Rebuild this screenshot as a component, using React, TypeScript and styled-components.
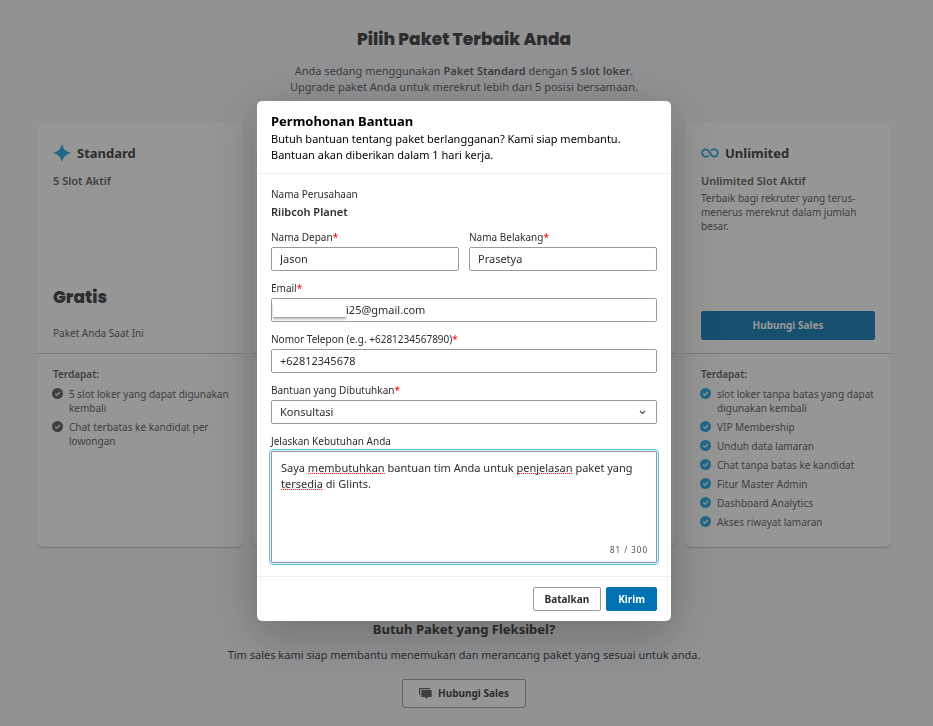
import React, { useState } from "react";
import styled, { createGlobalStyle } from "styled-components";

const GlobalStyle = createGlobalStyle`
  *, *::before, *::after { box-sizing: border-box; }
  body {
    margin: 0;
    background: #f5f7fa;
    color: #2d2d2d;
    font-family: "Noto Sans", "Open Sans", sans-serif;
    font-size: 11px;
    line-height: 16px;
  }
  h1, h2, h3, p, ul { margin: 0; padding: 0; }
  button, input, select, textarea { font: inherit; color: inherit; }
`;

const Page = styled.main`
  min-height: 100vh;
  padding: 26px 42px 18px 37px;
`;

const PageHeader = styled.header`
  display: flex;
  flex-direction: column;
  align-items: center;
  gap: 11px;
  text-align: center;
  color: #505050;
`;

const PageTitle = styled.h1`
  font-family: Poppins, Inter, sans-serif;
  font-size: 17px;
  line-height: 26px;
  font-weight: 800;
  color: #2d2d2d;
`;

const Strong = styled.strong`
  font-weight: 600;
`;

const Plans = styled.section`
  display: grid;
  grid-template-columns: repeat(4, 1fr);
  gap: 10px;
  margin-top: 27px;
`;

const PlanCard = styled.article`
  display: flex;
  flex-direction: column;
  min-height: 425px;
  background: #fff;
  border-radius: 6px;
  box-shadow: 0 1px 1px rgba(45, 45, 45, 0.3);
`;

const PlanSummary = styled.div`
  display: flex;
  flex-direction: column;
  height: 232px;
  padding: 21px 16px 13px;
  border-bottom: 1px solid #c6c6c6;
`;

const PlanName = styled.h2`
  display: flex;
  align-items: center;
  gap: 6px;
  font-size: 13px;
  line-height: 20px;
  font-weight: 700;
`;

const PlanSlots = styled.h3`
  margin-top: 10px;
  font-size: 11px;
  line-height: 16px;
  font-weight: 600;
  color: #505050;
`;

const PlanText = styled.p`
  margin-top: 2px;
  font-size: 10px;
  line-height: 14px;
  color: #505050;
`;

const PlanPrice = styled.p`
  margin-top: auto;
  font-family: Poppins, Inter, sans-serif;
  font-size: 17px;
  line-height: 26px;
  font-weight: 800;
`;

const PlanStatus = styled.p`
  margin-top: 16px;
  font-size: 10px;
  line-height: 14px;
  color: #505050;
`;

const PlanFeatures = styled.div`
  padding: 13px 12px 16px 16px;
  font-size: 10px;
  line-height: 14px;
  color: #505050;
`;

const FeatureTitle = styled.p`
  font-weight: 600;
`;

const FeatureList = styled.ul`
  display: flex;
  flex-direction: column;
  gap: 5px;
  margin-top: 6px;
  list-style: none;
`;

const Feature = styled.li`
  display: flex;
  gap: 6px;
  margin-left: -1px;

  svg { flex: none; margin-top: 1px; }
`;

const Button = styled.button<{ $primary?: boolean; $tall?: boolean }>`
  display: inline-flex;
  align-items: center;
  justify-content: center;
  gap: 6px;
  height: ${(p) => (p.$tall ? 29 : 24)}px;
  padding: 0 ${(p) => (p.$tall ? 16 : 11)}px 1px;
  border: 1px solid ${(p) => (p.$primary ? "#0072b1" : "#999")};
  border-radius: 2px;
  background: ${(p) => (p.$primary ? "#0072b1" : "#fff")};
  color: ${(p) => (p.$primary ? "#fff" : "#2d2d2d")};
  font-size: 10px;
  line-height: 14px;
  font-weight: 700;
  cursor: pointer;
`;

const CardAction = styled(Button)`
  width: 100%;
  margin-top: auto;
`;

const Flexible = styled.section`
  display: flex;
  flex-direction: column;
  align-items: center;
  margin-top: 72px;
  text-align: center;
`;

const FlexibleTitle = styled.h2`
  font-size: 13px;
  line-height: 20px;
  font-weight: 700;
`;

const FlexibleText = styled.p`
  margin: 8px 0 16px;
`;

const Overlay = styled.div`
  position: fixed;
  inset: 0;
  display: flex;
  align-items: flex-start;
  justify-content: center;
  padding: 101px 5px 0 0;
  background: rgba(45, 45, 45, 0.5);
`;

const Dialog = styled.form`
  width: 414px;
  max-width: 100%;
  background: #fff;
  border-radius: 5px;
  box-shadow: 0 12px 50px rgba(0, 0, 0, 0.25);
`;

const DialogHeader = styled.header`
  padding: 10px 14px;
  border-bottom: 1px solid #eee;
  color: #000;
`;

const DialogTitle = styled.h2`
  font-size: 13px;
  line-height: 20px;
  font-weight: 700;
`;

const DialogBody = styled.div`
  display: flex;
  flex-direction: column;
  gap: 10px;
  padding: 13px 14px;
`;

const Company = styled.div`
  display: flex;
  flex-direction: column;
  gap: 3px;
`;

const Caption = styled.span`
  font-size: 10px;
  line-height: 14px;
`;

const Field = styled.div`
  display: flex;
  flex: 1;
  flex-direction: column;
  gap: 3px;
  min-width: 0;
`;

const FieldRow = styled.div`
  display: flex;
  gap: 10px;
`;

const Label = styled.label`
  font-size: 10px;
  line-height: 14px;
`;

const Required = styled.span`
  color: #f00;
`;

const Control = styled.div`
  display: flex;
  align-items: center;
  height: 24px;
  border: 1px solid #999;
  border-radius: 2px;
  background: #fff;
`;

const TextInput = styled.input<{ $flush?: boolean }>`
  flex: 1;
  min-width: 0;
  height: 100%;
  padding: 0 8px 2px ${(p) => (p.$flush ? 0 : 8)}px;
  border: 0;
  outline: 0;
  background: none;
`;

const Redaction = styled.span`
  width: 73px;
  height: 14px;
  margin-left: 1px;
  background: #fff;
  box-shadow: 0 2px 2px rgba(0, 0, 0, 0.35);
`;

const Select = styled.select`
  flex: 1;
  height: 100%;
  padding: 0 8px;
  border: 0;
  outline: 0;
  appearance: none;
  background: none;
`;

const SelectControl = styled(Control)`
  display: grid;
  grid-template-columns: 1fr 28px;

  & > * { grid-row: 1; }
  & > select { grid-column: 1 / -1; }
  & > svg { grid-column: 2; justify-self: center; pointer-events: none; }
`;

const Note = styled.div`
  display: grid;
  height: 112px;
  border: 1px solid #999;
  border-radius: 2px;
  outline: 1px solid #5cc3ed;
  outline-offset: 1px;
  box-shadow: 0 0 0 1px #d8f0fa;
  background: #fff;

  & > * { grid-area: 1 / 1; }
`;

const NoteMarks = styled.div`
  padding: 8px 9px;
  color: transparent;
  white-space: pre-wrap;
  pointer-events: none;
  user-select: none;
`;

const Misspelt = styled.span`
  background: repeating-linear-gradient(90deg, #ff2020 0 1px, #ffc8c8 1px 2px) 0 13px / 100% 1px no-repeat;
`;

const NoteInput = styled.textarea`
  width: 100%;
  height: 100%;
  padding: 8px 9px;
  border: 0;
  outline: 0;
  resize: none;
  background: none;
`;

const Counter = styled.span`
  align-self: end;
  justify-self: end;
  padding: 0 8px 6px 0;
  font-size: 8px;
  line-height: 12px;
  letter-spacing: 1px;
  color: #505050;
  pointer-events: none;
`;

const DialogFooter = styled.footer`
  display: flex;
  justify-content: flex-end;
  gap: 5px;
  padding: 10px 14px;
  border-top: 1px solid #eee;
`;

const StarIcon = () => (
  <svg width="18" height="18" viewBox="0 0 18 18" aria-hidden="true">
    <path d="M9 0C10.200 3.600 11.200 5.200 12.200 5.900C13.200 6.900 14.800 7.800 18 9C14.800 10.200 13.200 11.100 12.200 12.100C11.200 12.900 10.200 14.400 9 18C7.800 14.400 6.800 12.900 5.800 12.100C4.800 11.100 3.200 10.200 0 9C3.200 7.800 4.800 6.900 5.800 5.900C6.800 5.200 7.800 3.600 9 0Z" fill="#17a2e0" />
  </svg>
);

const InfinityIcon = () => (
  <svg width="18" height="18" viewBox="0 0 18 18" fill="none" stroke="#17a2e0" strokeWidth="1.800" aria-hidden="true">
    <path d="M8 11.400C7.200 12.200 6.200 12.600 5 12.600C2.700 12.600 1.200 11 1.200 9C1.200 7 2.700 5.400 5 5.400C9 5.400 9 12.600 13 12.600C15.300 12.600 16.800 11 16.800 9C16.800 7 15.300 5.400 13 5.400C11.800 5.400 10.800 5.800 10 6.600" />
  </svg>
);

const CheckIcon = ({ color }: { color: string }) => (
  <svg width="11" height="11" viewBox="0 0 11 11" aria-hidden="true">
    <circle cx="5.500" cy="5.500" r="5.500" fill={color} />
    <path d="M3.100 5.600L4.800 7.200L8 4" fill="none" stroke="#fff" strokeWidth="1.200" />
  </svg>
);

const ChatIcon = () => (
  <svg width="13" height="11" viewBox="0 0 13 11" fill="#505050" aria-hidden="true">
    <path d="M0 0H11V1.200H1.200V7H0Z" />
    <path d="M2.300 2H12.700V9H9L7.500 11L6 9H2.300Z" />
  </svg>
);

const ChevronIcon = () => (
  <svg width="7" height="5" viewBox="0 0 7 5" fill="none" stroke="#505050" strokeWidth="1.200" aria-hidden="true">
    <path d="M1 1L3.500 3.500L6 1" />
  </svg>
);

interface FeaturesProps {
  items: string[];
  color: string;
}

const Features = ({ items, color }: FeaturesProps) => (
  <PlanFeatures>
    <FeatureTitle>Terdapat:</FeatureTitle>
    <FeatureList>
      {items.map((item) => (
        <Feature key={item}>
          <CheckIcon color={color} />
          <span>{item}</span>
        </Feature>
      ))}
    </FeatureList>
  </PlanFeatures>
);

const standardFeatures = ["5 slot loker yang dapat digunakan kembali", "Chat terbatas ke kandidat per lowongan"];
const unlimitedFeatures = [
  "slot loker tanpa batas yang dapat digunakan kembali",
  "VIP Membership",
  "Unduh data lamaran",
  "Chat tanpa batas ke kandidat",
  "Fitur Master Admin",
  "Dashboard Analytics",
  "Akses riwayat lamaran",
];

const misspelt = new Set(["membutuhkan", "penjelasan", "tersedia"]);
const initialNote = "Saya membutuhkan bantuan tim Anda untuk penjelasan paket yang tersedia di Glints.";

export default function App() {
  const [note, setNote] = useState(initialNote);

  return (
    <>
      <GlobalStyle />
      <Page>
        <PageHeader>
          <PageTitle>Pilih Paket Terbaik Anda</PageTitle>
          <p>
            Anda sedang menggunakan <Strong>Paket Standard</Strong> dengan <Strong>5 slot loker</Strong>.
            <br />
            Upgrade paket Anda untuk merekrut lebih dari 5 posisi bersamaan.
          </p>
        </PageHeader>

        <Plans>
          <PlanCard>
            <PlanSummary>
              <PlanName><StarIcon />Standard</PlanName>
              <PlanSlots>5 Slot Aktif</PlanSlots>
              <PlanPrice>Gratis</PlanPrice>
              <PlanStatus>Paket Anda Saat Ini</PlanStatus>
            </PlanSummary>
            <Features items={standardFeatures} color="#505050" />
          </PlanCard>
          <PlanCard><PlanSummary /></PlanCard>
          <PlanCard><PlanSummary /></PlanCard>
          <PlanCard>
            <PlanSummary>
              <PlanName><InfinityIcon />Unlimited</PlanName>
              <PlanSlots>Unlimited Slot Aktif</PlanSlots>
              <PlanText>Terbaik bagi rekruter yang terus-menerus merekrut dalam jumlah besar.</PlanText>
              <CardAction type="button" $primary $tall>Hubungi Sales</CardAction>
            </PlanSummary>
            <Features items={unlimitedFeatures} color="#17a2e0" />
          </PlanCard>
        </Plans>

        <Flexible>
          <FlexibleTitle>Butuh Paket yang Fleksibel?</FlexibleTitle>
          <FlexibleText>Tim sales kami siap membantu menemukan dan merancang paket yang sesuai untuk anda.</FlexibleText>
          <Button type="button" $tall><ChatIcon />Hubungi Sales</Button>
        </Flexible>
      </Page>

      <Overlay>
        <Dialog role="dialog" aria-modal="true" aria-labelledby="dialog-title" onSubmit={(e) => e.preventDefault()}>
          <DialogHeader>
            <DialogTitle id="dialog-title">Permohonan Bantuan</DialogTitle>
            <p>
              Butuh bantuan tentang paket berlangganan? Kami siap membantu.
              <br />
              Bantuan akan diberikan dalam 1 hari kerja.
            </p>
          </DialogHeader>
          <DialogBody>
            <Company>
              <Caption>Nama Perusahaan</Caption>
              <Strong>Riibcoh Planet</Strong>
            </Company>
            <FieldRow>
              <Field>
                <Label htmlFor="first">Nama Depan<Required>*</Required></Label>
                <Control><TextInput id="first" defaultValue="Jason" /></Control>
              </Field>
              <Field>
                <Label htmlFor="last">Nama Belakang<Required>*</Required></Label>
                <Control><TextInput id="last" defaultValue="Prasetya" /></Control>
              </Field>
            </FieldRow>
            <Field>
              <Label htmlFor="email">Email<Required>*</Required></Label>
              <Control>
                <Redaction />
                <TextInput id="email" $flush defaultValue="i25@gmail.com" />
              </Control>
            </Field>
            <Field>
              <Label htmlFor="phone">Nomor Telepon (e.g. +6281234567890)<Required>*</Required></Label>
              <Control><TextInput id="phone" type="tel" defaultValue="+62812345678" /></Control>
            </Field>
            <Field>
              <Label htmlFor="help">Bantuan yang Dibutuhkan<Required>*</Required></Label>
              <SelectControl>
                <Select id="help" defaultValue="Konsultasi">
                  <option>Konsultasi</option>
                </Select>
                <ChevronIcon />
              </SelectControl>
            </Field>
            <Field>
              <Label htmlFor="note">Jelaskan Kebutuhan Anda</Label>
              <Note>
                <NoteMarks aria-hidden="true">
                  {note.split(/(\s+)/).map((word, i) =>
                    misspelt.has(word) ? <Misspelt key={i}>{word}</Misspelt> : word
                  )}
                </NoteMarks>
                <NoteInput
                  id="note"
                  maxLength={300}
                  spellCheck={false}
                  value={note}
                  onChange={(e) => setNote(e.target.value)}
                />
                <Counter>{note.length} / 300</Counter>
              </Note>
            </Field>
          </DialogBody>
          <DialogFooter>
            <Button type="button">Batalkan</Button>
            <Button type="submit" $primary>Kirim</Button>
          </DialogFooter>
        </Dialog>
      </Overlay>
    </>
  );
}
